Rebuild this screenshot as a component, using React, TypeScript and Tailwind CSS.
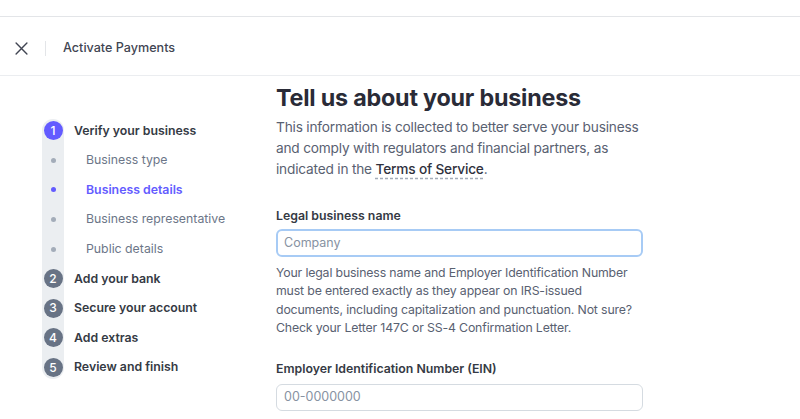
import React from "react";

const subSteps = [
  { label: "Business type", active: false },
  { label: "Business details", active: true },
  { label: "Business representative", active: false },
  { label: "Public details", active: false },
];

const laterSteps = ["Add your bank", "Secure your account", "Add extras", "Review and finish"];

export default function App() {
  return (
    <div className="w-[800px] h-[419px] overflow-hidden bg-white font-['Inter',sans-serif] text-[#30313d]">
      <div className="h-[17px] border-b border-[#e3e5e8]" />
      <header className="h-[59px] flex items-center border-b border-[#ebedf0] pt-[5px]">
        <div className="w-[45px] flex justify-center">
          <svg width="13" height="13" viewBox="0 0 12 12" className="text-[#414552] ml-[-3px]">
            <path d="M1 1l10 10M11 1L1 11" stroke="currentColor" strokeWidth="1.3" strokeLinecap="round" />
          </svg>
        </div>
        <div className="w-px h-[15px] bg-[#e3e5e8]" />
        <div className="pl-[17px] text-[12.6px] font-medium text-[#414552]">Activate Payments</div>
      </header>

      <div className="flex">
        {/* Stepper */}
        <nav className="w-[276px] pl-[42px] pt-[40px] shrink-0">
          <div className="relative">
            <div className="absolute left-0 top-[3px] bottom-[3px] w-[22px] rounded-full bg-[#ebeef1]" />
            <div className="relative flex flex-col">
              <div className="h-[29.6px] flex items-center">
                <div className="w-[22px] flex justify-center">
                  <span className="w-[19px] h-[19px] rounded-full bg-[#635bff] text-white text-[12px] font-medium flex items-center justify-center">1</span>
                </div>
                <span className="ml-[10px] text-[12.3px] font-semibold text-[#353a44]">Verify your business</span>
              </div>
              {subSteps.map((s) => (
                <div key={s.label} className="h-[29.6px] flex items-center">
                  <div className="w-[22px] flex justify-center">
                    <span className={s.active ? "w-[5px] h-[5px] rounded-full bg-[#635bff]" : "w-[5px] h-[5px] rounded-full bg-[#a3acb9]"} />
                  </div>
                  <span className={s.active ? "ml-[22px] text-[12.3px] font-semibold text-[#635bff]" : "ml-[22px] text-[12.3px] text-[#6c7688]"}>{s.label}</span>
                </div>
              ))}
              {laterSteps.map((label, i) => (
                <div key={label} className="h-[29.6px] flex items-center">
                  <div className="w-[22px] flex justify-center">
                    <span className="w-[19px] h-[19px] rounded-full bg-[#687385] text-white text-[12px] font-medium flex items-center justify-center">{i + 2}</span>
                  </div>
                  <span className="ml-[10px] text-[12.3px] font-semibold text-[#353a44]">{label}</span>
                </div>
              ))}
            </div>
          </div>
        </nav>

        {/* Form */}
        <main className="w-[370px] pt-[7px]">
          <h1 className="text-[23.3px] leading-[30px] font-bold text-[#2a2b37] tracking-[-0.2px]">Tell us about your business</h1>
          <p className="mt-[4px] text-[13.7px] leading-[21px] tracking-[-0.2px] text-[#596171]">
            This information is collected to better serve your business and comply with regulators and financial partners, as indicated in the{" "}
            <a className="font-medium text-[#30313d] underline decoration-dashed decoration-[#a3acb9] underline-offset-[4px]">Terms of Service</a>.
          </p>

          <label className="block mt-[27px] text-[12.3px] font-semibold text-[#353a44] leading-[18px]">Legal business name</label>
          <div className="mt-[4px] w-[367px] h-[28px] rounded-[6px] border-[2px] border-[#a7cbf5] flex items-center px-[6px]">
            <span className="text-[12.5px] text-[#8792a2]">Company</span>
          </div>
          <p className="mt-[7px] text-[12.3px] leading-[18.3px] tracking-[-0.15px] text-[#596171]">
            Your legal business name and Employer Identification Number must be entered exactly as they appear on IRS-issued documents, including capitalization and punctuation. Not sure? Check your Letter 147C or SS-4 Confirmation Letter.
          </p>

          <label className="block mt-[23px] text-[12.3px] font-semibold text-[#353a44] leading-[18px]">Employer Identification Number (EIN)</label>
          <div className="mt-[6px] w-[367px] h-[27px] rounded-[6px] border border-[#d5dbe1] flex items-center px-[7px]">
            <span className="text-[12.5px] text-[#8792a2]">00-0000000</span>
          </div>
        </main>
      </div>
    </div>
  );
}
